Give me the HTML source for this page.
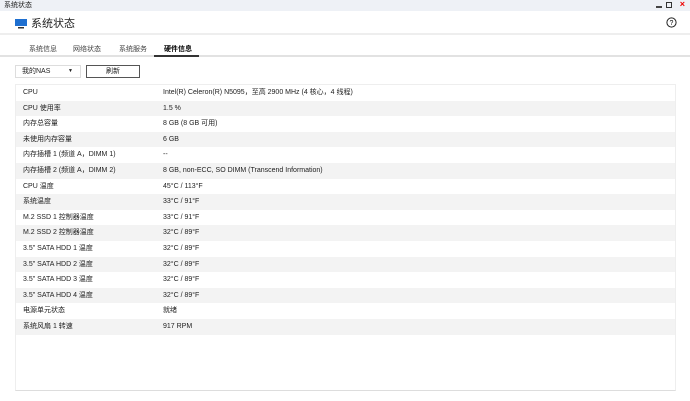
<!DOCTYPE html>
<html><head><meta charset="utf-8"><style>
*{margin:0;padding:0;box-sizing:border-box}
body{width:690px;height:401px;overflow:hidden;background:#fff;font-family:"Liberation Sans","Noto Sans CJK SC",sans-serif;color:#222;position:relative}
.tb{position:absolute;left:0;top:0;width:690px;height:11px;background:#eef1f6;font-size:7px;line-height:11px;padding-left:4px}
.hd{position:absolute;top:11px;left:0;width:690px;height:24px;border-bottom:2px solid #eee}
.hd .t{position:absolute;left:31px;top:4px;font-size:11px}
.tabs{position:absolute;top:37px;left:0;width:690px;height:20px;border-bottom:2px solid #e2e2e2;font-size:7px;color:#444}
.tabs span{position:absolute;top:7px}
.sel{position:absolute;left:154px;top:18px;width:45px;height:2px;background:#333}
.dd{position:absolute;left:15px;top:65px;width:66px;height:13px;border:1px solid #ddd;font-size:7px;line-height:11px;padding-left:6px}
.btn{position:absolute;left:86px;top:65px;width:54px;height:13px;border:1px solid #555;font-size:7px;line-height:11px;text-align:center}
.panel{position:absolute;left:15px;top:84px;width:661px;height:307px;border:1px solid #eee;border-bottom-color:#ddd}
.r{height:15.6px;font-size:7px;line-height:15.6px;position:relative}
.r:nth-child(even){background:#f3f3f3}
.r .a{position:absolute;left:7px}.r .b{position:absolute;left:147px}
</style></head><body>
<div class="tb">系统状态</div>
<div style="position:absolute;right:28px;top:6px;width:6px;height:2px;background:#444"></div>
<div style="position:absolute;right:18px;top:2px;width:6px;height:6px;border:1.3px solid #333"></div>
<div style="position:absolute;right:5px;top:-1px;color:#e00;font-size:9px;font-weight:bold">×</div>
<div class="hd">
<svg style="position:absolute;left:15px;top:8px" width="12" height="10"><rect x="0" y="0" width="12" height="7" fill="#1e6fd0"/><rect x="3" y="8" width="6" height="1.5" fill="#333"/></svg>
<div class="t">系统状态</div>
<svg style="position:absolute;left:666px;top:6px" width="11" height="11"><circle cx="5.5" cy="5.5" r="4.6" fill="none" stroke="#222" stroke-width="1"/><text x="5.5" y="8" font-size="7" text-anchor="middle" font-family="Liberation Sans">?</text></svg>
</div>
<div class="tabs"><span style="left:29px">系统信息</span><span style="left:73px">网络状态</span><span style="left:119px">系统服务</span><span style="left:164px;color:#000;font-weight:bold">硬件信息</span><div class="sel"></div></div>
<div class="dd">我的NAS<span style="position:absolute;right:7px;font-size:5px">▼</span></div>
<div class="btn">刷新</div>
<div class="panel">
<div class="r"><span class="a">CPU</span><span class="b">Intel(R) Celeron(R) N5095，至高 2900 MHz (4 核心，4 线程)</span></div>
<div class="r"><span class="a">CPU 使用率</span><span class="b">1.5 %</span></div>
<div class="r"><span class="a">内存总容量</span><span class="b">8 GB (8 GB 可用)</span></div>
<div class="r"><span class="a">未使用内存容量</span><span class="b">6 GB</span></div>
<div class="r"><span class="a">内存插槽 1 (频道 A，DIMM 1)</span><span class="b">--</span></div>
<div class="r"><span class="a">内存插槽 2 (频道 A，DIMM 2)</span><span class="b">8 GB, non-ECC, SO DIMM (Transcend Information)</span></div>
<div class="r"><span class="a">CPU 温度</span><span class="b">45°C / 113°F</span></div>
<div class="r"><span class="a">系统温度</span><span class="b">33°C / 91°F</span></div>
<div class="r"><span class="a">M.2 SSD 1 控制器温度</span><span class="b">33°C / 91°F</span></div>
<div class="r"><span class="a">M.2 SSD 2 控制器温度</span><span class="b">32°C / 89°F</span></div>
<div class="r"><span class="a">3.5" SATA HDD 1 温度</span><span class="b">32°C / 89°F</span></div>
<div class="r"><span class="a">3.5" SATA HDD 2 温度</span><span class="b">32°C / 89°F</span></div>
<div class="r"><span class="a">3.5" SATA HDD 3 温度</span><span class="b">32°C / 89°F</span></div>
<div class="r"><span class="a">3.5" SATA HDD 4 温度</span><span class="b">32°C / 89°F</span></div>
<div class="r"><span class="a">电源单元状态</span><span class="b">就绪</span></div>
<div class="r"><span class="a">系统风扇 1 转速</span><span class="b">917 RPM</span></div>
</div>
</body></html>
